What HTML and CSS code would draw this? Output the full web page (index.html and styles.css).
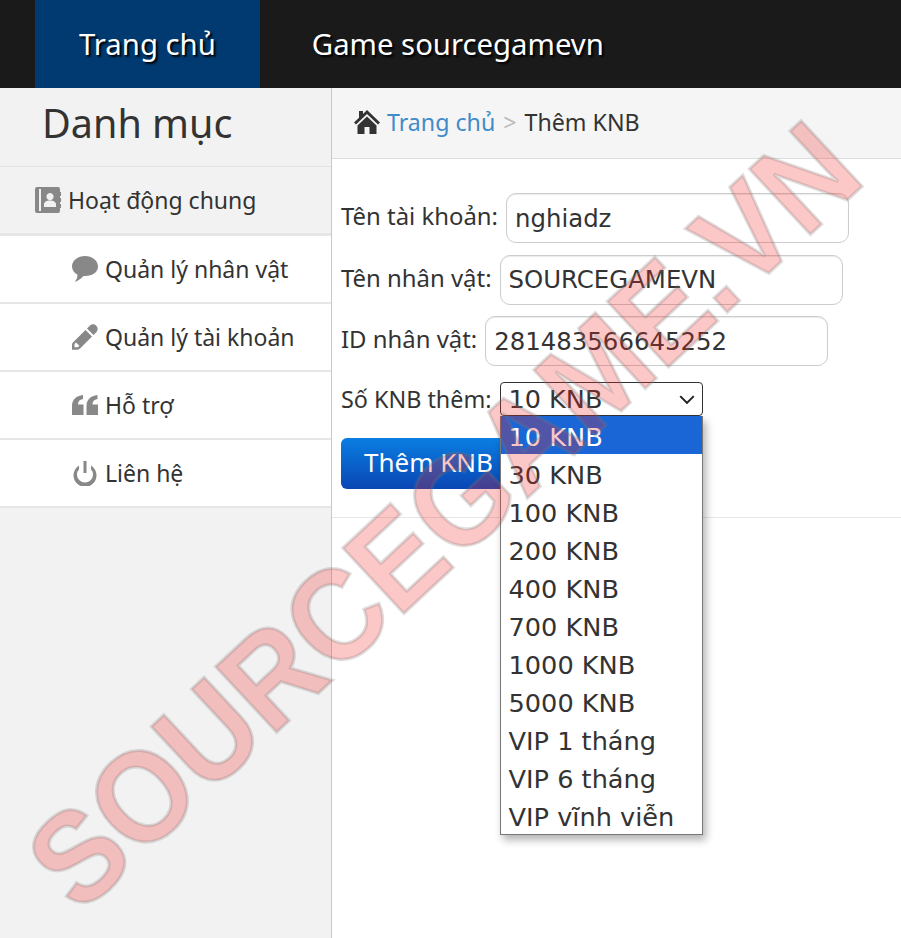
FILE: index.html
```html
<!DOCTYPE html>
<html lang="vi">
<head>
    <meta charset="UTF-8">
    <meta name="viewport" content="width=device-width, initial-scale=1.0">
    <title>Thêm KNB</title>
    <link rel="stylesheet" href="styles.css">
</head>
<body>

<div class="navbar">
    <a class="nav-item active" href="#">Trang chủ</a>
    <a class="nav-item" href="#">Game sourcegamevn</a>
</div>

<div class="page">
    <div class="sidebar">
        <h2 class="side-title">Danh mục</h2>
        <a class="side-link top" href="#">
            <svg class="side-icon" viewBox="0 0 26 26"><path fill-rule="evenodd" d="M2 0H23a2 2 0 0 1 2 2V5H26V9H25V11H26V15H25V17H26V21H25V24a2 2 0 0 1-2 2H2a2 2 0 0 1-2-2V2A2 2 0 0 1 2 0ZM4 2V24H6V2ZM15 6a3.6 3.6 0 1 0 .01 0ZM9 20H21V17.500C21 15 18.500 13.500 15 13.500S9 15 9 17.500Z"/></svg>
            Hoạt động chung
        </a>
        <a class="side-link" href="#">
            <svg class="side-icon" viewBox="0 0 26 26"><path d="M13 0C20 0 26 4.500 26 10.500C26 16 20.500 20 13.500 20C12.800 20 12.200 20 11.500 19.900C9 22.500 6 24.800 2.800 26C4.500 24 5.500 21.500 5.500 18.800C2.200 17 0 14 0 10.500C0 4.500 6 0 13 0Z"/></svg>
            Quản lý nhân vật
        </a>
        <a class="side-link" href="#">
            <svg class="side-icon" viewBox="0 0 26 26"><path fill-rule="evenodd" d="M18 1.500C20 -.2 22.500 0 24.200 1.800C26 3.600 26.200 6 24.500 8L21.500 11L15 4.500ZM13.500 6L20 12.500L8 24.500C7 25.400 6 25.800 4.800 25.800H0V21C0 19.800.5 18.800 1.400 18ZM4 18.500L2.500 20V23.300H5.800L7.400 21.800Z"/></svg>
            Quản lý tài khoản
        </a>
        <a class="side-link" href="#">
            <svg class="side-icon" viewBox="0 0 26 26"><path d="M0 23V14C0 9 2.500 5 8.500 3.500L11 3V7C7.500 7.500 6 9.500 6 12.500H11.500V23ZM14.500 23V14C14.500 9 17 5 23 3.500L25.500 3V7C22 7.500 20.500 9.500 20.500 12.500H26V23Z"/></svg>
            Hỗ trợ
        </a>
        <a class="side-link" href="#">
            <svg class="side-icon" viewBox="0 0 26 26"><path d="M11.500 1H14.500V13H11.500ZM7 5.500V9.300A8 8 0 1 0 19 9.300V5.500A11.500 11.500 0 1 1 7 5.500Z"/></svg>
            Liên hệ
        </a>
    </div>

    <div class="content">
        <div class="breadcrumb">
            <svg class="home-icon" viewBox="0 0 26 24"><path d="M13 0L26 12.500L24 14.500L13 4L2 14.500L0 12.500L5 7.700V1H9V3.900ZM13 6.500L22.500 15.500V24H15.500V17H10.500V24H3.500V15.500Z"/></svg>
            <a href="#">Trang chủ</a>
            <span class="sep">&gt;</span>
            <span>Thêm KNB</span>
        </div>

        <form class="add-form">
            <div class="form-row">
                <label for="account">Tên tài khoản:</label>
                <input id="account" type="text" value="nghiadz">
            </div>
            <div class="form-row">
                <label for="character">Tên nhân vật:</label>
                <input id="character" type="text" value="SOURCEGAMEVN">
            </div>
            <div class="form-row">
                <label for="charid">ID nhân vật:</label>
                <input id="charid" type="text" value="281483566645252">
            </div>
            <div class="form-row select-row">
                <label for="amount">Số KNB thêm:</label>
                <div class="select-wrap">
                    <select id="amount">
                        <option>10 KNB</option>
                    </select>
                    <svg class="chevron" viewBox="0 0 14 8"><path d="M1 1L7 7L13 1" fill="none" stroke="#222" stroke-width="1.800"/></svg>
                    <ul class="options">
                        <li class="selected">10 KNB</li>
                        <li>30 KNB</li>
                        <li>100 KNB</li>
                        <li>200 KNB</li>
                        <li>400 KNB</li>
                        <li>700 KNB</li>
                        <li>1000 KNB</li>
                        <li>5000 KNB</li>
                        <li>VIP 1 tháng</li>
                        <li>VIP 6 tháng</li>
                        <li>VIP vĩnh viễn</li>
                    </ul>
                </div>
            </div>
            <button type="button" class="submit-btn">Thêm KNB</button>
        </form>
    </div>
</div>

<div class="watermark">SOURCEGAME.VN</div>

</body>
</html>
```

FILE: styles.css
```css
body {
    font-family: 'Noto Sans', sans-serif;
    margin: 0;
    padding: 0;
    height: 938px;
    overflow: hidden;
    position: relative;
    background: #fff;
    color: #333;
}
a {
    text-decoration: none;
}
.navbar {
    display: flex;
    height: 88px;
    padding-left: 35px;
    background-color: #1a1a1a;
}
.nav-item {
    display: flex;
    align-items: center;
    padding: 0 44px 1px;
    font-size: 29.3px;
    color: #fff;
    text-shadow: 2px 2px 2px #000;
}
.nav-item + .nav-item {
    padding-left: 52px;
}
.nav-item.active {
    background-color: #003a70;
}
.page {
    display: flex;
    height: 850px;
}
.sidebar {
    width: 331px;
    flex: none;
    background-color: #f2f2f2;
    border-right: 1px solid #c8c8c8;
}
.side-title {
    margin: 0;
    height: 79px;
    padding-left: 42px;
    box-sizing: border-box;
    border-bottom: 1px solid #e3e3e3;
    font-size: 39.5px;
    font-weight: normal;
    line-height: 71px;
    color: #333;
}
.side-link {
    display: flex;
    align-items: center;
    height: 68px;
    padding-left: 72px;
    box-sizing: border-box;
    background-color: #fff;
    border-bottom: 2px solid #e6e6e6;
    font-size: 23px;
    color: #333;
}
.side-link.top {
    height: 69px;
    padding-left: 35px;
    background-color: #f2f2f2;
    border-bottom-width: 3px;
}
.side-icon {
    width: 26px;
    height: 26px;
    margin-right: 7px;
    fill: #888;
    flex: none;
}
.content {
    flex: 1;
}
.breadcrumb {
    display: flex;
    align-items: center;
    height: 71px;
    padding-left: 22px;
    padding-bottom: 2px;
    box-sizing: border-box;
    background-color: #f5f5f5;
    border-bottom: 1px solid #ddd;
    font-size: 23.2px;
    color: #333;
}
.breadcrumb a {
    color: #428bca;
}
.home-icon {
    width: 26px;
    height: 24px;
    margin-right: 7px;
    fill: #333;
}
.sep {
    margin: 0 8px;
    color: #bbb;
}
.add-form {
    height: 359px;
    padding: 34px 0 0 9px;
    box-sizing: border-box;
    border-bottom: 1px solid #e6e6e6;
}
.form-row {
    display: flex;
    align-items: center;
    gap: 8px;
    margin-bottom: 11.5px;
}
.form-row label {
    padding-bottom: 5px;
    font-size: 23.9px;
    color: #333;
}
.form-row input {
    width: 343px;
    height: 50px;
    box-sizing: border-box;
    padding: 0 8px;
    border: 1px solid #ccc;
    border-radius: 10px;
    font-family: 'DejaVu Sans', sans-serif;
    font-size: 24.4px;
    color: #333;
    box-shadow: inset 0 1px 1px rgba(0, 0, 0, 0.08);
}
.select-row {
    margin-top: 16px;
    margin-bottom: 22px;
}
.select-row label {
    padding-bottom: 0;
    font-size: 23.35px;
}
.select-wrap {
    position: relative;
    width: 203px;
    height: 34px;
}
.select-wrap select {
    display: block;
    width: 100%;
    height: 100%;
    padding: 0 8px;
    box-sizing: border-box;
    background: #fff;
    border: 1px solid #333;
    border-radius: 4px;
    appearance: none;
    font-family: 'DejaVu Sans', sans-serif;
    font-size: 25.5px;
    color: #333;
}
.chevron {
    position: absolute;
    right: 8px;
    top: 13px;
    width: 16px;
    height: 9px;
}
.options {
    position: absolute;
    left: 0;
    top: 34px;
    z-index: 5;
    width: 203px;
    margin: 0;
    padding: 0;
    box-sizing: border-box;
    list-style: none;
    background: #fff;
    border: 1px solid #777;
    border-top: 0;
    box-shadow: 3px 5px 8px rgba(0, 0, 0, 0.3);
    font-family: 'DejaVu Sans', sans-serif;
    font-size: 25.6px;
    color: #333;
}
.options li {
    height: 38px;
    line-height: 42px;
    padding-left: 8px;
}
.options li.selected {
    background-color: #1a66d6;
    color: #fff;
}
.submit-btn {
    display: block;
    width: 170px;
    height: 51px;
    padding: 0 0 3px 23px;
    text-align: left;
    background: linear-gradient(to bottom, #0a7ee2, #0a46b4);
    color: #fff;
    font-family: 'Noto Sans', sans-serif;
    font-size: 26px;
    border: none;
    border-radius: 6px;
}
.watermark {
    position: absolute;
    left: -92px;
    top: 459px;
    z-index: 10;
    width: 1054px;
    transform: rotate(-43deg) scaleY(1.08);
    font-family: 'Liberation Sans', sans-serif;
    font-weight: bold;
    font-size: 120.5px;
    line-height: 130px;
    white-space: nowrap;
    color: rgba(240, 40, 40, 0.26);
    -webkit-text-stroke: 3px rgba(120, 120, 120, 0.24);
    pointer-events: none;
}
```
